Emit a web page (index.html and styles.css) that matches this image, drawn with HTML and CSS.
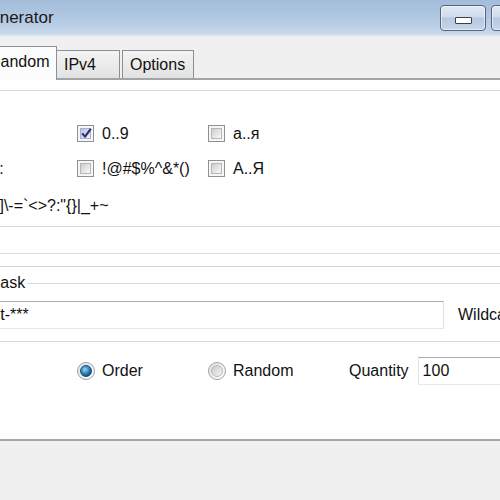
FILE: index.html
```html
<!DOCTYPE html>
<html lang="en">
<head>
    <meta charset="UTF-8">
    <title>Generator</title>
    <link rel="stylesheet" href="styles.css">
</head>
<body>
    <div class="window">
        <div class="titlebar">
            <span class="title">Generator</span>
            <div class="caption">
                <button class="cap-btn"><span class="min-glyph"></span></button>
                <button class="cap-btn"><span class="max-glyph"></span></button>
            </div>
        </div>

        <div class="tabs">
            <div class="tab tab-simple">Simple</div>
            <div class="tab tab-active">Random</div>
            <div class="tab tab-ipv4">IPv4</div>
            <div class="tab tab-options">Options</div>
        </div>

        <div class="panel">
            <fieldset class="group group-chars">
                <legend>Characters</legend>
                <div class="char-grid">
                    <span class="row-label">Letters:</span>
                    <label class="check"><span class="cb checked">
                        <svg width="15" height="15" viewBox="0 0 15 15"><path d="M3.2 7.4 L6 10.6 L11.8 2.8" fill="none" stroke="#26366a" stroke-width="2.2" stroke-linejoin="round"/></svg>
                    </span>0..9</label>
                    <label class="check"><span class="cb"></span>a..я</label>

                    <span class="row-label">Symbols:</span>
                    <label class="check"><span class="cb"></span>!@#$%^&amp;*()</label>
                    <label class="check"><span class="cb"></span>A..Я</label>

                    <span class="special">[]\-=`&lt;&gt;?:"{}|_+~</span>
                </div>
            </fieldset>

            <div class="strip"></div>

            <fieldset class="group group-mask">
                <legend>Mask</legend>
                <div class="mask-row">
                    <input class="text-input mask-input" type="text" value="test-***">
                    <span class="hint">Wildcards: * # ?</span>
                </div>
            </fieldset>

            <div class="order-row">
                <span class="row-label">Mode:</span>
                <label class="option"><span class="radio selected"></span>Order</label>
                <label class="option"><span class="radio"></span>Random</label>
                <span class="qty-label">Quantity</span>
                <input class="text-input qty-input" type="text" value="100">
            </div>
        </div>
    </div>
</body>
</html>
```

FILE: styles.css
```css
* {
    box-sizing: border-box;
}

body {
    margin: 0;
    overflow: hidden;
    background: #f0f0f0;
    font-family: "Liberation Sans", Arial, sans-serif;
    font-size: 16px;
    color: #111;
}

/* window is wider than the shot, shifted left */
.window {
    margin-left: -100px;
    width: 760px;
    height: 500px;
    display: flex;
    flex-direction: column;
}

.titlebar {
    height: 36px;
    display: flex;
    align-items: center;
    padding-left: 77px;
    background: linear-gradient(#a2bcda 0%, #b5cae3 60%, #c9d9ec 94%, #dfe8f2 100%);
}

.title {
    width: 463px;
    font-size: 17px;
    color: #1a1a1a;
}

.caption {
    display: flex;
    gap: 5px;
    align-self: flex-start;
    margin-top: 5px;
}

.cap-btn {
    width: 46px;
    height: 26px;
    padding: 0 0 6px;
    border: 1px solid #56657c;
    border-radius: 4px;
    background: linear-gradient(#e0e9f4 0%, #cfdcec 45%, #b7c9e0 50%, #c6d6ea 100%);
    box-shadow: inset 0 0 0 1px rgba(255, 255, 255, 0.55);
    display: flex;
    align-items: flex-end;
    justify-content: center;
}

.min-glyph {
    width: 17px;
    height: 7px;
    border: 1px solid #3a3f48;
    border-radius: 1px;
    background: #fff;
}

.max-glyph {
    width: 16px;
    height: 12px;
    border: 1px solid #3a3f48;
    border-top-width: 3px;
    background: #fff;
}

/* tabs */
.tabs {
    height: 42px;
    display: flex;
    align-items: flex-end;
    padding-left: 12px;
}

.tab {
    height: 28px;
    display: flex;
    align-items: center;
    padding-left: 7px;
    border: 1px solid #8d9096;
    border-bottom: none;
    background: linear-gradient(#f3f3f3 0%, #ebebeb 50%, #e2e2e2 100%);
}

.tab-simple {
    width: 68px;
}

.tab-active {
    position: relative;
    z-index: 1;
    width: 77px;
    height: 34px;
    margin-bottom: -2px;
    padding-bottom: 3px;
    padding-left: 8px;
    background: #fcfcfc;
}

.tab-ipv4 {
    width: 63px;
    border-left: none;
}

.tab-options {
    width: 72px;
    margin-left: 2px;
}

/* tab page */
.panel {
    height: 363px;
    margin-left: 10px;
    background: #fff;
    border-top: 2px solid #a3a4a6;
    border-bottom: 2px solid #a6a6a6;
    border-left: 1px solid #a6a6a6;
    padding-left: 5px;
}

.group {
    margin: 1px 0 0;
    padding: 17px 0 0 21px;
    border: 1px solid #d3d9de;
    border-right: none;
    min-width: 0;
}

.group legend {
    padding: 0 2px;
    line-height: 18px;
}

.group-chars legend {
    margin-left: -26px;
}

.char-grid {
    display: grid;
    grid-template-columns: 139px 131px auto;
    grid-template-rows: 35px 35px 40px;
    align-items: center;
}

.row-label {
    white-space: nowrap;
}

.check,
.option {
    display: flex;
    align-items: center;
    gap: 8px;
    white-space: nowrap;
}

.cb {
    position: relative;
    width: 17px;
    height: 17px;
    border: 1px solid #8f9092;
    background: #f6f6f6;
    padding: 2px;
    display: flex;
}

.cb::before {
    content: "";
    flex: 1;
    border: 1px solid #b4b7bb;
    background: linear-gradient(135deg, #cdcdcd 0%, #e6e6e6 55%, #f8f8f8 100%);
}

.cb.checked::before {
    border-color: #a9b1d0;
    background: linear-gradient(135deg, #b9c1e2 0%, #d6dbf1 55%, #eef0fa 100%);
}

.cb svg {
    position: absolute;
    left: 1px;
    top: 0;
}

.special {
    grid-column: 1 / -1;
    padding-left: 57px;
    white-space: nowrap;
}

.strip {
    height: 14px;
    margin-top: 26px;
    border-top: 1px solid #dedede;
    border-bottom: 1px solid #d2d2d2;
}

.group-mask {
    margin-top: 7px;
    padding-top: 9px;
    padding-bottom: 12px;
}

.group-mask legend {
    margin-left: 47px;
}

.mask-row {
    display: flex;
    align-items: center;
    gap: 14px;
    margin-left: 36px;
}

.text-input {
    height: 28px;
    padding: 0 4px;
    font: inherit;
    color: #111;
    border: 1px solid;
    border-color: #a4abb3 #dbdfe6 #e3e9ef #e2e3ea;
    background: #fff;
    outline: none;
}

.mask-input {
    width: 470px;
}

.hint {
    white-space: nowrap;
}

.order-row {
    display: grid;
    grid-template-columns: 139px 131px 141px max-content max-content;
    justify-content: start;
    align-items: center;
    margin-top: 15px;
    padding-left: 22px;
}

.option {
    gap: 7px;
}

.radio {
    width: 18px;
    height: 18px;
    border-radius: 50%;
    border: 1px solid #9ba3ab;
    background: linear-gradient(135deg, #e2e2e2, #ffffff);
    display: flex;
    align-items: center;
    justify-content: center;
}

.radio::before {
    content: "";
    width: 10px;
    height: 10px;
    border-radius: 50%;
    border: 1px solid #b5b8bc;
    background: linear-gradient(135deg, #cbcbcb, #f4f4f4);
}

.radio.selected::before {
    border-color: #1d4a70;
    background: radial-gradient(circle at 40% 35%, #9ad6f5 0%, #3d8ec4 40%, #15507f 75%, #0e3556 100%);
}

.qty-label {
    white-space: nowrap;
}

.qty-input {
    width: 120px;
    margin-left: 9px;
}
```
